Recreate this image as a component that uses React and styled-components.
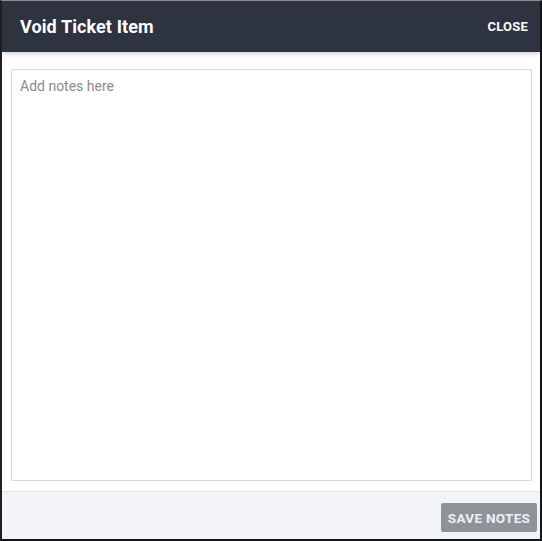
import React from "react";
import styled, { createGlobalStyle } from "styled-components";

const Global = createGlobalStyle`
  html, body { margin: 0; padding: 0; background: #fff; }
  body { font-family: Roboto, "Liberation Sans", Arial, sans-serif; }
  * { box-sizing: border-box; }
`;

const Frame = styled.div`
  width: 542px;
  height: 541px;
  display: flex;
  flex-direction: column;
  border-top: 1px solid #8a8d92;
  border-left: 2px solid #1e1f22;
  border-right: 2px solid #141518;
  border-bottom: 2px solid #141518;
  background: #fff;
  overflow: hidden;
`;

const Header = styled.header`
  height: 51px;
  flex: none;
  display: flex;
  align-items: center;
  justify-content: space-between;
  padding: 0 12px 0 18px;
  background: #2d333f;
  color: #fff;
  position: relative;
  z-index: 1;
  box-shadow: 0 2px 5px rgba(0, 0, 0, 0.18);
`;

const Title = styled.h1`
  margin: 0;
  font-size: 18px;
  font-weight: 700;
  letter-spacing: 0.1px;
`;

const CloseButton = styled.button`
  border: none;
  background: transparent;
  color: #fff;
  font-family: inherit;
  font-size: 13px;
  font-weight: 700;
  letter-spacing: 0.2px;
  padding: 0;
  cursor: pointer;
`;

const Body = styled.main`
  flex: 1;
  display: flex;
  padding: 17px 8px 10px 9px;
`;

const Notes = styled.textarea`
  flex: 1;
  resize: none;
  border: 1px solid #dcdcdc;
  border-radius: 0;
  padding: 8px 8px;
  font-family: inherit;
  font-size: 14px;
  color: #333;
  outline: none;
  &::placeholder { color: #8b8b8b; }
`;

const Footer = styled.footer`
  height: 48px;
  flex: none;
  display: flex;
  align-items: flex-start;
  justify-content: flex-end;
  padding: 11px 3px 0 0;
  background: #f3f4f8;
  border-top: 1px solid #e2e3e6;
`;

const SaveButton = styled.button`
  width: 96px;
  height: 29px;
  padding: 0;
  border: none;
  border-radius: 2px;
  background: #8e939a;
  color: #eef0f2;
  font-family: inherit;
  font-size: 13.5px;
  font-weight: 700;
  letter-spacing: 0.3px;
  cursor: pointer;
`;

export default function App() {
  return (
    <>
      <Global />
      <Frame>
        <Header>
          <Title>Void Ticket Item</Title>
          <CloseButton>CLOSE</CloseButton>
        </Header>
        <Body>
          <Notes placeholder="Add notes here" />
        </Body>
        <Footer>
          <SaveButton>SAVE NOTES</SaveButton>
        </Footer>
      </Frame>
    </>
  );
}
